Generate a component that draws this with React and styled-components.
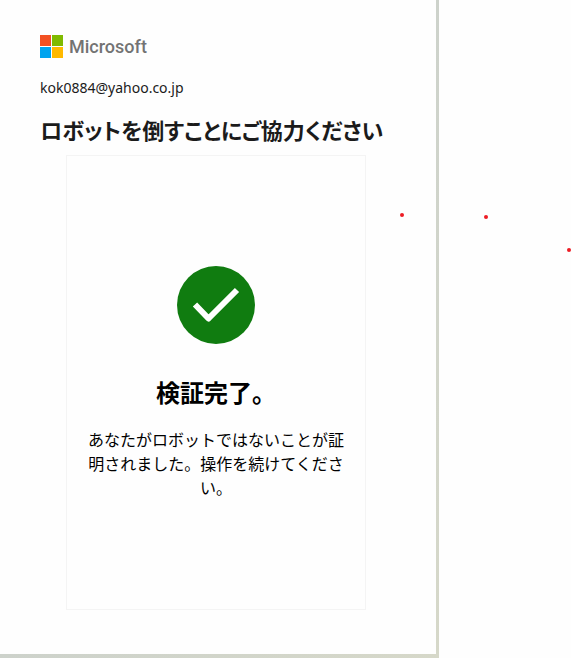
import React from 'react';
import styled, { createGlobalStyle } from 'styled-components';

const GlobalStyle = createGlobalStyle`
  body {
    margin: 0;
    background: #fefefe;
    color: #1b1b1b;
    font-family: 'Noto Sans', 'Noto Sans CJK JP', sans-serif;
  }
`;

const Page = styled.div`
  display: grid;
  grid-template-columns: minmax(0, 439px) 1fr;
  min-height: 100vh;
  position: relative;
  overflow: hidden;
`;

const Backdrop = styled.div`
  display: flex;
  box-sizing: border-box;
  padding: 0 3px 4px 0;
  background: linear-gradient(to bottom right, #c6cdcd, #cdd2cb 50%, #d6d8c9);
`;

const Card = styled.main`
  flex: 1;
  min-width: 0;
  padding: 35px 44px 44px 40px;
  background: #fefefe;
`;

const Brand = styled.div`
  display: flex;
  align-items: center;
  gap: 6px;
  height: 23px;
  color: #737373;
  font-family: Roboto, sans-serif;
  font-size: 18px;
  font-weight: 500;
  line-height: 23px;

  svg {
    display: block;
  }
`;

const Account = styled.div`
  margin-top: 18px;
  font-size: 14px;
  line-height: 24px;
`;

const Title = styled.h1`
  margin: 14px 0 11px;
  font-family: 'Noto Sans CJK JP', sans-serif;
  font-size: 22px;
  font-weight: 700;
  line-height: 30px;
  font-feature-settings: 'palt';
  white-space: nowrap;
`;

const Challenge = styled.section`
  box-sizing: border-box;
  display: flex;
  flex-direction: column;
  align-items: center;
  max-width: 300px;
  margin: 0 auto;
  padding: 110px 20px;
  border: 1px solid #f4f4f4;
  color: #000;
  text-align: center;

  svg {
    display: block;
  }
`;

const Status = styled.h2`
  margin: 32px 0 19px;
  font-family: 'Noto Sans CJK JP', sans-serif;
  font-size: 24px;
  font-weight: 700;
  line-height: 32px;
`;

const Message = styled.p`
  margin: 0;
  font-family: 'Noto Sans CJK JP', sans-serif;
  font-size: 16px;
  line-height: 24px;
`;

const Dot = styled.span`
  position: absolute;
  left: ${p => p.$x}px;
  top: ${p => p.$y}px;
  width: 4px;
  height: 4px;
  border-radius: 50%;
  background: #ed1c24;
`;

const MARKS = [
  { x: 400, y: 213 },
  { x: 484, y: 215 },
  { x: 567, y: 248 },
];

const Logo = () => (
  <svg width="23" height="23" viewBox="0 0 23 23" aria-hidden="true">
    <path fill="#f25022" d="M0 0h11v11H0z" />
    <path fill="#7fba00" d="M12 0h11v11H12z" />
    <path fill="#00a4ef" d="M0 12h11v11H0z" />
    <path fill="#ffb900" d="M12 12h11v11H12z" />
  </svg>
);

const CheckMark = () => (
  <svg width="78" height="78" viewBox="0 0 78 78" aria-hidden="true">
    <circle cx="39" cy="39" r="39" fill="#107c10" />
    <path
      d="M18 38.5L31.5 52.5L60 24"
      fill="none"
      stroke="#fff"
      strokeWidth="6"
      strokeLinejoin="round"
    />
  </svg>
);

const App = () => (
  <>
    <GlobalStyle />
    <Page lang="ja">
      <Backdrop>
        <Card>
          <Brand>
            <Logo />
            <span>Microsoft</span>
          </Brand>
          <Account>kok0884@yahoo.co.jp</Account>
          <Title>ロボットを倒すことにご協力ください</Title>
          <Challenge>
            <CheckMark />
            <Status>検証完了。</Status>
            <Message>あなたがロボットではないことが証明されました。操作を続けてください。</Message>
          </Challenge>
        </Card>
      </Backdrop>
      {MARKS.map(m => (
        <Dot key={m.x} $x={m.x} $y={m.y} />
      ))}
    </Page>
  </>
);

export default App;
